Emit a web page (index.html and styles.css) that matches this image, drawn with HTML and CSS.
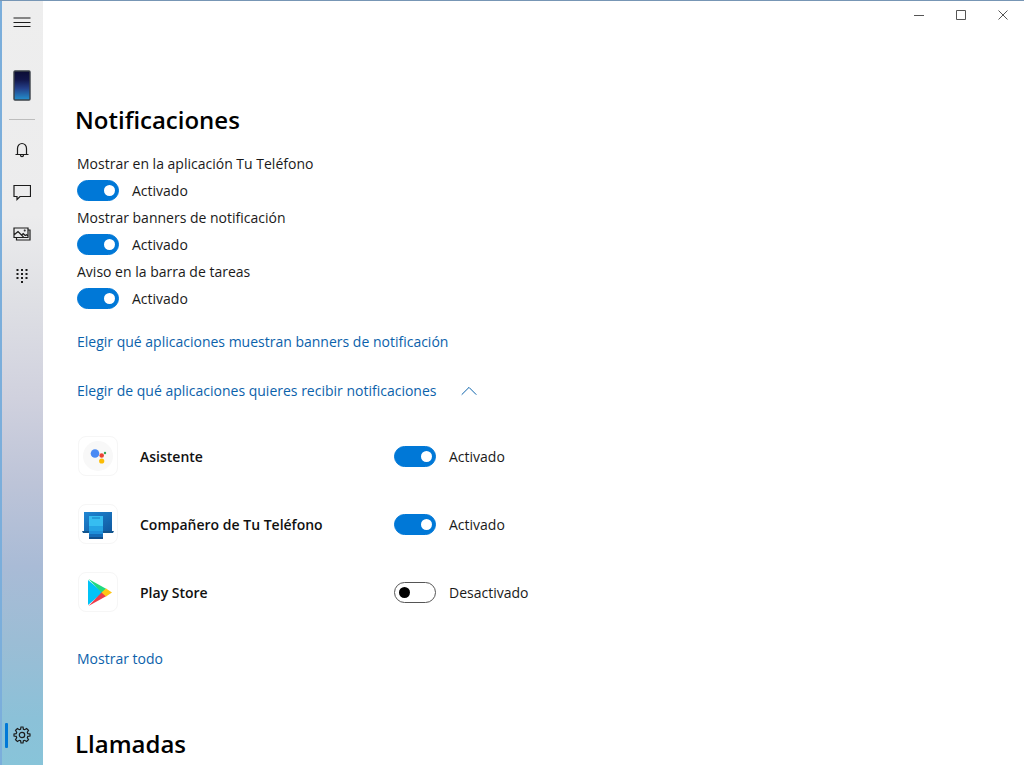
FILE: index.html
```
<!DOCTYPE html>
<html lang="es">
<head>
    <meta charset="UTF-8">
    <title>Tu Teléfono</title>
    <link rel="stylesheet" href="styles.css">
</head>
<body>
<div class="window">
    <nav class="sidebar">
        <button type="button" class="nav-btn menu" aria-label="Menú">
            <svg width="18" height="12" viewBox="0 0 18 12"><path d="M.5 2h17M.5 6.500h17M.5 10.500h17"/></svg>
        </button>
        <button type="button" class="nav-btn phone" aria-label="Teléfono">
            <svg width="18" height="31" viewBox="0 0 18 31">
                <defs>
                    <linearGradient id="screen" x1="0" y1="0" x2="0" y2="1">
                        <stop offset="0" stop-color="#0b0c33"/>
                        <stop offset=".3" stop-color="#12164a"/>
                        <stop offset=".6" stop-color="#24408a"/>
                        <stop offset="1" stop-color="#2492cf"/>
                    </linearGradient>
                </defs>
                <rect x="1" y="1" width="16" height="29" rx="1" fill="url(#screen)" stroke="#3b4148" stroke-width="1.400"/>
            </svg>
        </button>
        <hr class="divider">
        <button type="button" class="nav-btn" aria-label="Notificaciones">
            <svg width="18" height="18" viewBox="0 0 18 18"><path d="M2.500 13.500h13M4.500 13.500V7.500a4.500 5 0 0 1 9 0v6M7.500 14a1.500 1.700 0 0 0 3 0"/></svg>
        </button>
        <button type="button" class="nav-btn" aria-label="Mensajes">
            <svg width="18" height="18" viewBox="0 0 18 18"><path d="M1 2.500h16.500v11H7L4 16.500v-3H1z"/></svg>
        </button>
        <button type="button" class="nav-btn" aria-label="Fotos">
            <svg width="18" height="18" viewBox="0 0 18 18"><path d="M1 3h14v9.500H1zM15 5h2v10H3.500v-2.500M1.500 9.500 5 6.500l5.500 5.500M8.500 10.200l1.700-1.700 2 2 1.300-.8L15 11"/><circle cx="11.700" cy="5.500" r=".4"/></svg>
        </button>
        <button type="button" class="nav-btn" aria-label="Llamadas">
            <svg class="solid" width="18" height="18" viewBox="0 0 18 18">
                <path d="M3.500 2h2v2h-2zM8 2h2v2H8zM12.500 2h2v2h-2zM3.500 6h2v2h-2zM8 6h2v2H8zM12.500 6h2v2h-2zM3.500 10h2v2h-2zM8 10h2v2H8zM12.500 10h2v2h-2zM8 14h2v2H8z"/>
            </svg>
        </button>
        <button type="button" class="nav-btn settings" aria-label="Configuración">
            <svg width="18" height="18" viewBox="0 0 18 18">
                <path d="M7.600 3.200 8 1h2l.4 2.200 1.300.5 1.900-1.200 1.900 1.900-1.200 1.900.5 1.300 2.200.4v2l-2.200.4-.5 1.300 1.200 1.900-1.900 1.900-1.900-1.200-1.300.5L10 17H8l-.4-2.200-1.300-.5-1.900 1.200-1.900-1.900 1.200-1.900-.5-1.300L1 10V8l2.200-.4.5-1.300-1.200-1.900 1.900-1.900 1.900 1.200z"/>
                <circle cx="9" cy="9" r="2.700"/>
            </svg>
        </button>
    </nav>

    <main class="content">
        <div class="titlebar">
            <button type="button" aria-label="Minimizar"><svg width="10" height="10" viewBox="0 0 10 10"><path d="M0 5.500h10"/></svg></button>
            <button type="button" aria-label="Maximizar"><svg width="10" height="10" viewBox="0 0 10 10"><path d="M.5.5h9v9h-9z"/></svg></button>
            <button type="button" aria-label="Cerrar"><svg width="10" height="10" viewBox="0 0 10 10"><path d="M.5.5l9 9M9.500.5l-9 9"/></svg></button>
        </div>

        <section class="section">
            <h1>Notificaciones</h1>
            <div class="setting">
                <label for="show-app">Mostrar en la aplicación Tu Teléfono</label>
                <div class="switch-row"><input type="checkbox" role="switch" class="switch" id="show-app" checked><span>Activado</span></div>
            </div>
            <div class="setting">
                <label for="show-banners">Mostrar banners de notificación</label>
                <div class="switch-row"><input type="checkbox" role="switch" class="switch" id="show-banners" checked><span>Activado</span></div>
            </div>
            <div class="setting">
                <label for="taskbar">Aviso en la barra de tareas</label>
                <div class="switch-row"><input type="checkbox" role="switch" class="switch" id="taskbar" checked><span>Activado</span></div>
            </div>

            <a href="#" class="link">Elegir qué aplicaciones muestran banners de notificación</a>
            <a href="#apps" class="link expander">
                Elegir de qué aplicaciones quieres recibir notificaciones
                <svg width="16" height="10" viewBox="0 0 16 10"><path d="M.7 8.700 8 1.400l7.300 7.300"/></svg>
            </a>

            <ul class="apps" id="apps">
                <li>
                    <span class="app-icon">
                        <svg width="38" height="38" viewBox="0 0 38 38">
                            <circle cx="19" cy="19" r="15" fill="#f8f8f8"/>
                            <circle cx="16" cy="16.500" r="4.300" fill="#4a8af4"/>
                            <circle cx="22.700" cy="18.500" r="2.300" fill="#ea4335"/>
                            <circle cx="22.700" cy="24" r="2.600" fill="#fbbc05"/>
                            <circle cx="26" cy="16" r="1.200" fill="#34a853"/>
                        </svg>
                    </span>
                    <label for="assistant">Asistente</label>
                    <div class="switch-row"><input type="checkbox" role="switch" class="switch" id="assistant" checked><span>Activado</span></div>
                </li>
                <li>
                    <span class="app-icon">
                        <svg width="38" height="38" viewBox="0 0 38 38">
                            <defs>
                                <linearGradient id="laptop" x1="0" y1="0" x2="1" y2="1">
                                    <stop offset="0" stop-color="#1f86d3"/>
                                    <stop offset="1" stop-color="#1059a0"/>
                                </linearGradient>
                            </defs>
                            <path d="M5 7h28v19H5z" fill="url(#laptop)"/>
                            <path d="M3 26h32l-1 2H4z" fill="#12548d"/>
                            <path d="M10 11h14v23H10z" fill="#1f8fda"/>
                            <path d="M10 11h14v10H10z" fill="#36bdf1"/>
                            <path d="M10 21h14v5H10z" fill="#25a3e4"/>
                            <path d="M10 29h14v3H10z" fill="#156cb8"/>
                            <path d="M10 32h14v2H10z" fill="#124f8c"/>
                            <path d="M13 12.500h8v1h-8z" fill="#167ac0"/>
                        </svg>
                    </span>
                    <label for="companion">Compañero de Tu Teléfono</label>
                    <div class="switch-row"><input type="checkbox" role="switch" class="switch" id="companion" checked><span>Activado</span></div>
                </li>
                <li>
                    <span class="app-icon">
                        <svg width="38" height="38" viewBox="0 0 38 38">
                            <path d="M9 7v25l15-12.500z" fill="#00c3f7"/>
                            <path d="M9.500 6 27.500 16l-4.500 4z" fill="#20d980"/>
                            <path d="M9.500 33 27.500 23 23 19z" fill="#ed3b4b"/>
                            <path d="M27 15.500 33 19.500 27 23.500 22.500 19.500z" fill="#ffc515"/>
                        </svg>
                    </span>
                    <label for="play">Play Store</label>
                    <div class="switch-row"><input type="checkbox" role="switch" class="switch" id="play"><span>Desactivado</span></div>
                </li>
            </ul>

            <a href="#" class="link show-all">Mostrar todo</a>
        </section>

        <section class="section">
            <h1>Llamadas</h1>
        </section>
    </main>
</div>
</body>
</html>
```
FILE: styles.css
```
* {
    box-sizing: border-box;
    margin: 0;
    padding: 0;
}

body {
    font-family: "Segoe UI", "Open Sans", sans-serif;
    font-size: 14px;
    line-height: 27px;
    color: #1a1a1a;
    background: #fff;
}

button {
    border: 0;
    background: none;
}

svg {
    display: block;
    flex: none;
    fill: none;
    stroke: currentColor;
}

a {
    color: #0b62ab;
    text-decoration: none;
}

ul {
    list-style: none;
}

.window {
    display: flex;
    height: 100vh;
    border-top: 1px solid #7796b5;
}

/* sidebar */
.sidebar {
    display: flex;
    flex: none;
    flex-direction: column;
    width: 43px;
    padding-right: 1px;
    border-left: 2px solid #7baedb;
    background: linear-gradient(#eeeeee 0%, #ececed 28%, #e0e1e5 38%, #d0d1de 52%, #bdc4d8 63%, #a9bbd6 74%, #9bbdd5 84%, #8bc1d8 94%, #88c4d9 100%);
}

.nav-btn {
    display: flex;
    align-items: center;
    justify-content: center;
    width: 100%;
    height: 42px;
    color: #1c1c1c;
}

.nav-btn svg {
    stroke-width: 1.2;
}

.nav-btn .solid {
    fill: currentColor;
    stroke: none;
}

.phone {
    margin: 21px 0 13px;
}

.divider {
    width: 26px;
    margin: 0 auto 9px;
    border: 0;
    border-top: 1px solid #bdbdbd;
}

.settings {
    position: relative;
    margin: auto 0 9px;
}

.settings::before {
    content: "";
    position: absolute;
    top: 9px;
    left: 3px;
    width: 3px;
    height: 25px;
    border-radius: 1px;
    background: #0078d7;
}

/* main area */
.content {
    flex: 1;
    min-width: 0;
    overflow-y: auto;
    scrollbar-width: none;
}

.titlebar {
    display: flex;
    justify-content: flex-end;
    height: 28px;
}

.titlebar button {
    display: flex;
    align-items: center;
    justify-content: center;
    width: 42px;
    color: #555;
}

.section {
    padding: 71px 34px 0;
}

.section + .section {
    padding-top: 52px;
}

h1 {
    margin: 0 0 10px -2px;
    font-size: 24px;
    font-weight: 600;
    line-height: 40px;
    color: #000;
}

.setting label {
    display: block;
}

.switch-row {
    display: flex;
    align-items: center;
    gap: 13px;
}

.switch {
    position: relative;
    flex: none;
    width: 42px;
    height: 21px;
    border: 1px solid #555;
    border-radius: 11px;
    background: #fff;
    appearance: none;
}

.switch::before {
    content: "";
    position: absolute;
    top: 4px;
    left: 4px;
    width: 11px;
    height: 11px;
    border-radius: 50%;
    background: #000;
}

.switch:checked {
    border-color: #0078d7;
    background: #0078d7;
}

.switch:checked::before {
    left: 26px;
    background: #fff;
}

.link {
    display: flex;
    align-items: center;
    width: fit-content;
    margin-top: 16px;
}

.expander {
    gap: 25px;
    margin-top: 22px;
}

.show-all {
    margin-top: 19px;
}

.apps {
    margin-top: 18px;
}

.apps li {
    display: grid;
    grid-template-columns: 42px 233px 1fr;
    align-items: center;
    column-gap: 21px;
    height: 68px;
}

.apps label {
    font-weight: 600;
    color: #111;
}

.app-icon {
    width: 40px;
    margin-left: 1px;
    border: 1px solid #f6f6f6;
    border-radius: 8px;
}

.app-icon svg {
    stroke: none;
}
```
